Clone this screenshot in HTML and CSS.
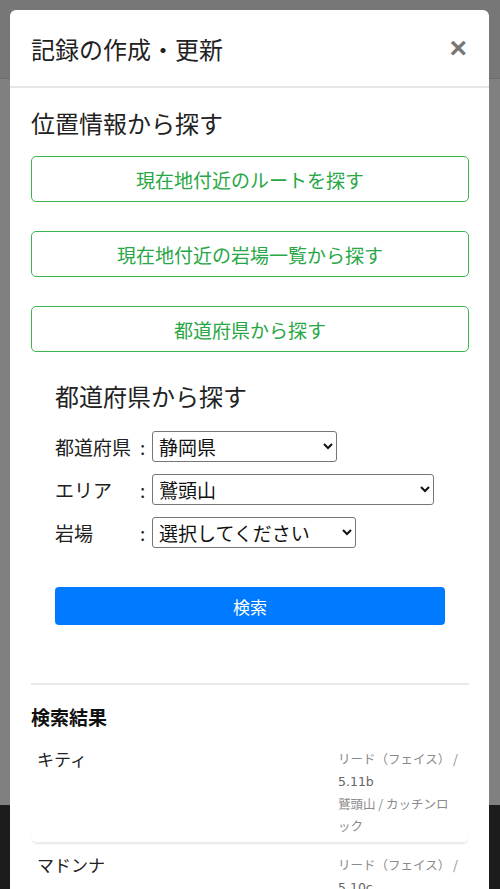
FILE: index.html
```html
<!DOCTYPE html>
<html lang="ja">
<head>
    <meta charset="UTF-8">
    <title>記録の作成・更新</title>
    <link rel="stylesheet" href="styles.css">
</head>
<body>
    <div class="pagina">
        <div class="barra-topo"></div>
        <div class="conteudo"></div>
        <div class="rodape"></div>
    </div>

    <div class="modal">
        <div class="modal-dialogo">
            <div class="modal-cabecalho">
                <h2>記録の作成・更新</h2>
                <span class="fechar">&times;</span>
            </div>

            <div class="modal-corpo">
                <h3>位置情報から探す</h3>
                <button type="button" class="botao-verde">現在地付近のルートを探す</button>
                <button type="button" class="botao-verde">現在地付近の岩場一覧から探す</button>
                <button type="button" class="botao-verde">都道府県から探す</button>

                <form class="busca">
                    <h3>都道府県から探す</h3>
                    <div class="linha">
                        <label>都道府県</label><span class="dois-pontos">:</span>
                        <select class="sel-pref">
                            <option>静岡県</option>
                        </select>
                    </div>
                    <div class="linha">
                        <label>エリア</label><span class="dois-pontos">:</span>
                        <select class="sel-area">
                            <option>鷲頭山</option>
                        </select>
                    </div>
                    <div class="linha">
                        <label>岩場</label><span class="dois-pontos">:</span>
                        <select class="sel-iwaba">
                            <option>選択してください</option>
                        </select>
                    </div>
                    <button type="button" class="botao-azul">検索</button>
                </form>

                <hr>

                <h4>検索結果</h4>
                <ul class="resultados">
                    <li>
                        <span class="nome">キティ</span>
                        <div class="detalhe">
                            <p>リード（フェイス） / <span class="grau">5.11b</span></p>
                            <p>鷲頭山 / カッチンロック</p>
                        </div>
                    </li>
                    <li>
                        <span class="nome">マドンナ</span>
                        <div class="detalhe">
                            <p>リード（フェイス） / <span class="grau">5.10c</span></p>
                            <p>鷲頭山 / カッチンロック</p>
                        </div>
                    </li>
                </ul>
            </div>
        </div>
    </div>
</body>
</html>
```

FILE: styles.css
```css
body {
    margin: 0;
    font-family: "Noto Sans CJK JP", "Noto Sans", sans-serif;
    color: #212121;
    overflow: hidden;
}

.pagina {
    height: 889px;
    display: flex;
    flex-direction: column;
}

.barra-topo {
    height: 78px;
    background-color: #777777;
    border-bottom: 1px solid #6c6c6c;
}

.conteudo {
    flex: 1;
    background-color: #808080;
}

.rodape {
    height: 84px;
    background-color: #1c1c1c;
}

.modal {
    position: fixed;
    left: 0;
    top: 0;
    width: 100%;
    height: 100%;
    overflow: hidden;
}

.modal-dialogo {
    margin: 10px;
    width: 479px;
    min-height: 900px;
    background-color: #fff;
    border-radius: 6px;
}

.modal-cabecalho {
    height: 76px;
    padding: 0 22px 0 21px;
    display: flex;
    align-items: center;
    justify-content: space-between;
    border-bottom: 2px solid #e6e6ea;
}

.modal-cabecalho h2 {
    margin: 0;
    font-size: 24px;
    font-weight: normal;
    color: #222;
}

.fechar {
    font-family: "Liberation Sans", Arial, sans-serif;
    font-size: 30px;
    font-weight: bold;
    color: #777;
    line-height: 1;
}

.modal-corpo {
    padding: 17px 20px 0 21px;
}

.modal-corpo h3 {
    margin: 0 0 15px 0;
    font-size: 24px;
    font-weight: normal;
    color: #222;
    line-height: 36px;
}

.botao-verde {
    display: block;
    width: 438px;
    height: 46px;
    margin-bottom: 29px;
    background-color: #fff;
    border: 1.5px solid #3cb550;
    border-radius: 5px;
    color: #28a745;
    font-family: inherit;
    font-size: 19px;
}

.busca {
    padding: 0 24px;
}

.busca h3 {
    line-height: 30px;
    margin-bottom: 20px;
}

.linha {
    display: flex;
    align-items: center;
    margin-bottom: 12px;
    font-size: 19px;
}

.linha label {
    width: 85px;
}

.dois-pontos {
    width: 12px;
}

select {
    height: 31px;
    font-family: inherit;
    font-size: 19px;
    color: #111;
    background-color: #fff;
    border: 1px solid #767676;
    border-radius: 3px;
    padding: 0 2px;
}

.sel-pref {
    width: 185px;
}

.sel-area {
    width: 282px;
}

.sel-iwaba {
    width: 204px;
}

.botao-azul {
    display: block;
    width: 390px;
    height: 38px;
    margin-top: 39px;
    background-color: #007bff;
    border: none;
    border-radius: 4px;
    color: #fff;
    font-family: inherit;
    font-size: 17px;
}

hr {
    margin: 58px 0 0 0;
    border: none;
    border-top: 2px solid #e9e9ec;
}

h4 {
    margin: 18px 0 6px 0;
    font-size: 19px;
    line-height: 28px;
    font-weight: bold;
    color: #111;
}

.resultados {
    list-style: none;
    margin: 0;
    padding: 0;
}

.resultados li {
    display: flex;
    justify-content: space-between;
    padding: 11px 9px 5px 6px;
    border-radius: 0 0 6px 6px;
    box-shadow: 0 2px 2px -1px rgba(0, 0, 0, 0.1);
    border-bottom: 1px solid #ececf0;
}

.nome {
    font-size: 17px;
    line-height: 22px;
    color: #222;
}

.detalhe {
    width: 122px;
    font-size: 12.5px;
    color: #8a8a8a;
    line-height: 22px;
}

.detalhe p {
    margin: 0;
}

.grau {
    font-family: "DejaVu Sans", sans-serif;
    color: #666;
}
```
